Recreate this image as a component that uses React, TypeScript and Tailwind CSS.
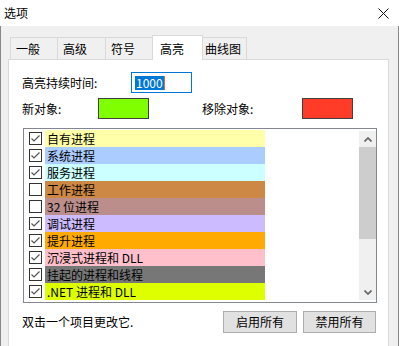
const TABS = [
  { label: '一般', w: 'w-[47px]' },
  { label: '高级', w: 'w-[48px]' },
  { label: '符号', w: 'w-[47px]' },
]

const ROWS = [
  { label: '自有进程', bg: 'bg-[#ffffaa]', on: true },
  { label: '系统进程', bg: 'bg-[#aaccff]', on: true },
  { label: '服务进程', bg: 'bg-[#ccffff]', on: true },
  { label: '工作进程', bg: 'bg-[#cc8844]', on: false },
  { label: '32 位进程', bg: 'bg-[#bb8e8c]', on: false },
  { label: '调试进程', bg: 'bg-[#ccbbff]', on: true },
  { label: '提升进程', bg: 'bg-[#ffaa00]', on: true },
  { label: '沉浸式进程和 DLL', bg: 'bg-[#ffc0cb]', on: true },
  { label: '挂起的进程和线程', bg: 'bg-[#777777]', on: true },
  { label: '.NET 进程和 DLL', bg: 'bg-[#ddff00]', on: true },
]

function Check({ on }: { on: boolean }) {
  return (
    <svg width="13" height="13" viewBox="0 0 13 13" className="shrink-0">
      <rect x="0.5" y="0.5" width="12" height="12" fill="#fff" stroke="#333" />
      {on && <path d="M2.5 6.5 L5 9 L10.5 3.5" fill="none" stroke="#555" strokeWidth="1.2" />}
    </svg>
  )
}

export default function App() {
  return (
    <div className="w-[399px] h-[346px] bg-[#f0f0f0] overflow-hidden flex flex-col text-[12px] leading-none text-black font-['Microsoft_YaHei','Noto_Sans_CJK_SC',sans-serif]">
      <div className="h-[26px] shrink-0 bg-white flex items-center justify-between pl-[4px] pr-[10px]">
        <span>选项</span>
        <svg width="11" height="11" viewBox="0 0 11 11">
          <path d="M0.5 0.5 L10.5 10.5 M10.5 0.5 L0.5 10.5" stroke="#111" strokeWidth="1" />
        </svg>
      </div>

      <div className="flex-1 flex flex-col border-l border-r border-[#888]">
        <div className="mt-[9px] ml-[9px] h-[24px] flex items-end">
          {TABS.map((t) => (
            <div
              key={t.label}
              className={`${t.w} h-[22px] border-l border-t border-[#d9d9d9] bg-[#f0f0f0] flex items-center pl-[5px]`}
            >
              {t.label}
            </div>
          ))}
          <div className="w-[51px] h-[25px] -mb-[1px] relative z-10 border border-b-0 border-[#d9d9d9] bg-white flex items-start pt-[7px] pl-[7px]">
            高亮
          </div>
          <div className="w-[44px] h-[22px] border-t border-r border-[#d9d9d9] bg-[#f0f0f0] flex items-center pl-[2px]">
            曲线图
          </div>
        </div>

        <div className="ml-[7px] w-[381px] flex-1 border border-b-0 border-[#d9d9d9] bg-white flex flex-col">
          <div className="mt-[12px] ml-[13px] h-[21px] flex items-center">
            <span className="w-[109px]">高亮持续时间:</span>
            <div className="w-[61px] h-[21px] border border-[#0078d7] flex items-center pl-[3px]">
              <span className="bg-[#0078d7] text-white px-[1px] py-[1px]">1000</span>
              <span className="w-[1px] h-[14px] bg-[#e07020]" />
            </div>
          </div>

          <div className="mt-[5px] ml-[13px] h-[21px] flex items-center">
            <span className="w-[76px]">新对象:</span>
            <div className="w-[51px] h-[21px] border border-[#404040] bg-[#80ff00]" />
            <span className="ml-[53px] w-[100px]">移除对象:</span>
            <div className="w-[51px] h-[21px] border border-[#404040] bg-[#ff3c28]" />
          </div>

          <div className="mt-[9px] ml-[14px] w-[354px] h-[175px] border border-[#828790] flex pt-[1px]">
            <div className="flex-1 flex flex-col">
              {ROWS.map((r) => (
                <div key={r.label} className="h-[17px] flex items-center pl-[5px] gap-[3px]">
                  <Check on={r.on} />
                  <div className={`w-[220px] h-[17px] ${r.bg} flex items-center pl-[2px]`}>{r.label}</div>
                </div>
              ))}
            </div>
            <div className="w-[17px] mt-[1px] mb-[2px] bg-[#f0f0f0] flex flex-col">
              <div className="h-[16px] flex items-center justify-center">
                <svg width="8" height="5" viewBox="0 0 8 5">
                  <path d="M0.5 4.5 L4 1 L7.5 4.5" fill="none" stroke="#606060" strokeWidth="1.6" />
                </svg>
              </div>
              <div className="h-[92px] bg-[#cdcdcd]" />
              <div className="flex-1" />
              <div className="h-[16px] flex items-center justify-center">
                <svg width="8" height="5" viewBox="0 0 8 5">
                  <path d="M0.5 0.5 L4 4 L7.5 0.5" fill="none" stroke="#606060" strokeWidth="1.6" />
                </svg>
              </div>
            </div>
          </div>

          <div className="mt-[8px] ml-[13px] mr-[12px] h-[22px] flex items-center">
            <span className="flex-1">双击一个项目更改它.</span>
            <button className="w-[74px] h-[22px] border border-[#adadad] bg-[#e1e1e1]">启用所有</button>
            <button className="ml-[6px] w-[73px] h-[22px] border border-[#adadad] bg-[#e1e1e1]">禁用所有</button>
          </div>
        </div>
      </div>
    </div>
  )
}
